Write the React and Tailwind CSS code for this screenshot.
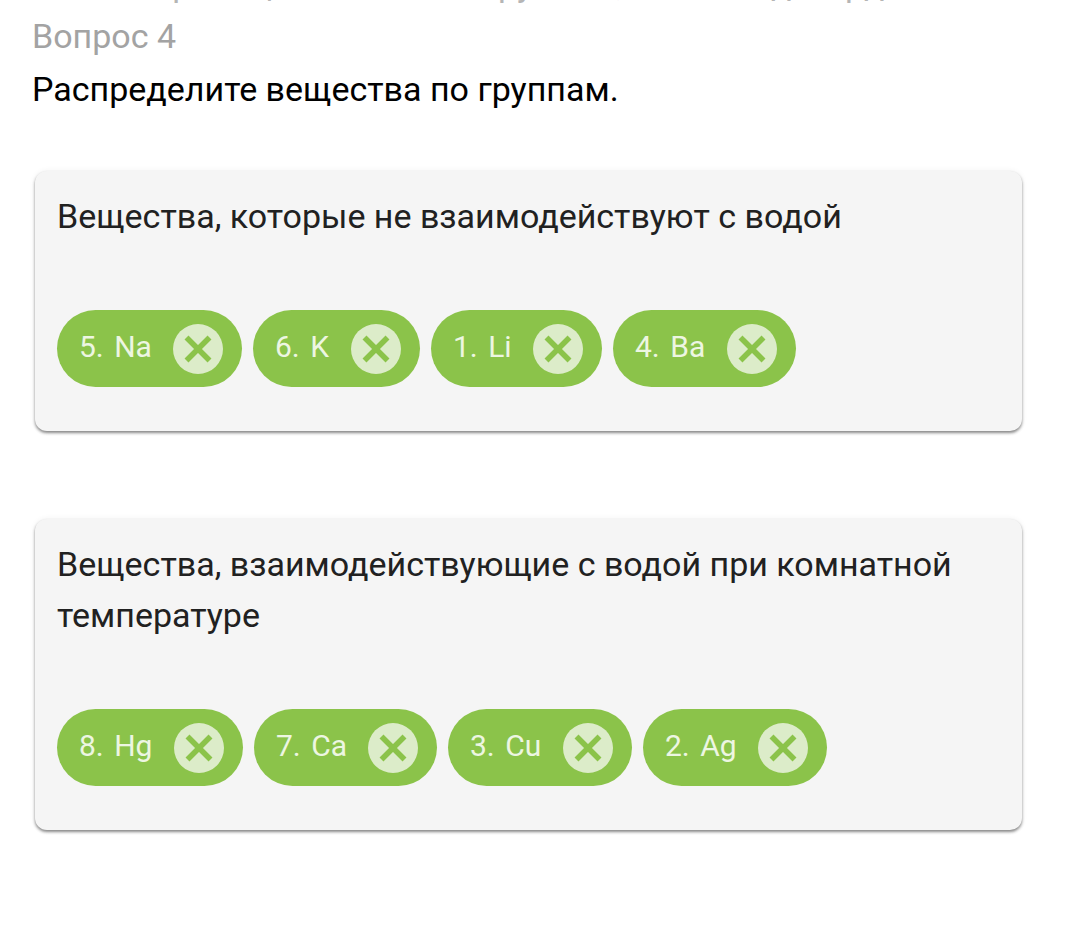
import { X } from "lucide-react";

const groups = [
  {
    title: "Вещества, которые не взаимодействуют с водой",
    chips: [
      { label: "5. Na", w: "w-[185px]" },
      { label: "6. K", w: "w-[167px]" },
      { label: "1. Li", w: "w-[171px]" },
      { label: "4. Ba", w: "w-[183px]" },
    ],
    height: "h-[260px]",
  },
  {
    title: "Вещества, взаимодействующие с водой при комнатной температуре",
    chips: [
      { label: "8. Hg", w: "w-[186px]" },
      { label: "7. Ca", w: "w-[183px]" },
      { label: "3. Cu", w: "w-[184px]" },
      { label: "2. Ag", w: "w-[184px]" },
    ],
    height: "h-[311px]",
  },
];

function Chip({ label, w }) {
  return (
    <div className={`${w} h-[77px] rounded-full bg-[#8bc34a] flex items-center justify-between pl-[22px] pr-[19px]`}>
      <span className="text-[30px] [word-spacing:3px] leading-none text-[#edf6e2] pb-[3px] whitespace-nowrap">{label}</span>
      <span className="w-[50px] h-[50px] rounded-full bg-[#dcecc9] flex items-center justify-center shrink-0">
        <X className="w-[46px] h-[46px] text-[#8bc34a]" strokeWidth={2.9} strokeLinecap="butt" />
      </span>
    </div>
  );
}

export default function App() {
  return (
    <div className="w-[1068px] h-[930px] bg-white overflow-hidden font-['Roboto',sans-serif]">
      {/* only the descenders of the line above are still on screen */}
      <div className="h-[6px] overflow-hidden pl-[130px] text-[34px] leading-[40px] text-[#b5b5b5]">
        <div className="-mt-[36px] whitespace-nowrap">Перетащите ответы к группам, затем подтвердите.</div>
      </div>
      <div className="pl-[32px]">
        <p className="mt-[10px] text-[34px] leading-[40px] text-[#a3a3a3]">Вопрос 4</p>
        <p className="mt-[13px] text-[34px] leading-[40px] text-black">Распределите вещества по группам.</p>
      </div>

      <div className="ml-[35px] mt-[62px] w-[987px] flex flex-col gap-[88px]">
        {groups.map((g) => (
          <div key={g.title} className={`${g.height} rounded-[12px] bg-[#f5f5f5] pt-[20px] px-[22px] shadow-[0_2px_3px_rgba(0,0,0,0.45),0_0_6px_rgba(0,0,0,0.06)]`}>
            <p className="text-[34px] leading-[51px] text-[#212121]">{g.title}</p>
            <div className="flex gap-[11px] mt-[68px]">
              {g.chips.map((c) => (
                <Chip key={c.label} label={c.label} w={c.w} />
              ))}
            </div>
          </div>
        ))}
      </div>
    </div>
  );
}
